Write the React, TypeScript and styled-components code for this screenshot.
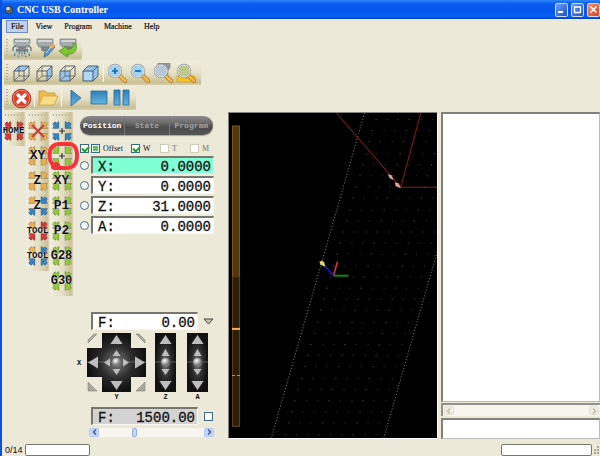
import React from "react";
import styled, { createGlobalStyle, css } from "styled-components";

const SERIF = '"Liberation Serif", serif';
const MONO = '"Liberation Mono", monospace';
const FACE = "#ece9d8";

const GlobalStyle = createGlobalStyle`
  * { box-sizing: border-box; }
  body { margin: 0; background: ${FACE}; }
  button, input { font: inherit; color: inherit; margin: 0; padding: 0; border: 0; border-radius: 0; background: none; min-width: 0; }
  svg { display: block; flex: none; }
`;

const Window = styled.div`
  display: flex;
  flex-direction: column;
  min-height: 100vh;
  border-left: 2px solid #0c50dc;
  background: ${FACE};
  font: 8px/10px ${SERIF};
  color: #111;
`;

const TitleBar = styled.header`
  display: flex;
  align-items: center;
  gap: 3px;
  height: 19px;
  padding: 0 0 0 2px;
  background: linear-gradient(#2f86f8, #0a5af0 20%, #0458ee 65%, #0a62fa 85%, #0340c0);
  color: #fff;
`;

const Title = styled.h1`
  flex: 1;
  margin: 0;
  font: bold 10px/14px ${SERIF};
  white-space: nowrap;
`;

const CaptionButton = styled.button<{ $danger?: boolean }>`
  display: grid;
  place-items: center;
  width: 13px;
  height: 14px;
  border: 1px solid #c9dcff;
  border-radius: 2px;
  background: ${(p) =>
    p.$danger ? "linear-gradient(135deg, #f09070, #d8401c)" : "linear-gradient(135deg, #6c9cf8, #1f50cc)"};
`;

const MenuBar = styled.nav`
  display: flex;
  gap: 2px;
  padding: 1px 4px 3px;
`;

const MenuItem = styled.button<{ $active?: boolean }>`
  height: 13px;
  padding: 0 4px;
  border: 1px solid ${(p) => (p.$active ? "#6c8cc8" : "transparent")};
  background: ${(p) => (p.$active ? "#c0d0ee" : "transparent")};
  line-height: 11px;
  -webkit-text-stroke: 0.2px #111;
`;

const Toolbars = styled.div`
  display: flex;
  flex-direction: column;
  align-items: flex-start;
  gap: 1px;
  padding: 0 2px 2px;
`;

const Toolbar = styled.div`
  display: flex;
  align-items: center;
  height: 24px;
  padding: 0 3px 0 2px;
  background: linear-gradient(#f0edde, #e6e0c6 50%, #c9c096 90%, #d8d1b0);
`;

const Grip = styled.span<{ $wide?: boolean }>`
  ${(p) =>
    p.$wide
      ? css`width: 18px; height: 2px; margin: 2px auto; background: repeating-linear-gradient(90deg, #b9b28e 0 1px, transparent 1px 3px);`
      : css`width: 2px; height: 18px; margin-right: 2px; background: repeating-linear-gradient(#b9b28e 0 1px, transparent 1px 3px);`}
`;

const ToolButton = styled.button`
  display: grid;
  place-items: center;
  width: 23px;
  height: 22px;
`;

const Separator = styled.span`
  width: 1px;
  height: 18px;
  margin: 0 2px 0 1px;
  background: #f8f6ea;
`;

const Body = styled.main`
  display: flex;
  flex: 1;
`;

const MacroColumns = styled.div`
  display: flex;
  align-items: flex-start;
  gap: 1px;
`;

const MacroColumn = styled.div`
  display: flex;
  flex-direction: column;
  width: 23px;
  padding-bottom: 3px;
  background: linear-gradient(90deg, #f1eee0, #e4dec4 55%, #cbc299 92%, #d9d2b2);
`;

const MacroButton = styled.button`
  position: relative;
  display: grid;
  place-items: center;
  height: 25px;
  > svg, > span { grid-area: 1 / 1; }
`;

const MacroText = styled.span<{ $size: number }>`
  position: relative;
  font: bold ${(p) => p.$size}px/14px ${MONO};
  text-shadow: 0 0 1px #fff;
`;

const Marker = styled.svg`
  position: absolute;
  left: -4px;
  top: -2px;
  z-index: 2;
  pointer-events: none;
`;

const Controls = styled.section`
  display: flex;
  flex-direction: column;
  width: 155px;
  padding: 4px 14px 2px 7px;
`;

const Tabs = styled.div`
  display: grid;
  grid-template-columns: repeat(3, 1fr);
  height: 19px;
  margin-right: 1px;
  border-radius: 10px;
  overflow: hidden;
  background: linear-gradient(#8c8c8c, #6c6c6c 35%, #4c4c4c 60%, #555);
  box-shadow: 0 1px 1px #aaa693;
`;

const Tab = styled.button<{ $active?: boolean }>`
  color: ${(p) => (p.$active ? "#fff" : "#a2a2a2")};
  font: bold 8px/18px ${MONO};
  & + & { border-left: 1px solid #777; }
`;

const Options = styled.div`
  display: flex;
  align-items: center;
  gap: 2px;
  height: 11px;
  margin: 8px 0 2px;
`;

const Option = styled.label<{ $muted?: boolean; $room?: number }>`
  display: flex;
  align-items: center;
  gap: 3px;
  width: ${(p) => (p.$room ? p.$room + "px" : "auto")};
  color: ${(p) => (p.$muted ? "#77756a" : "#111")};
`;

const Check = styled.input.attrs({ type: "checkbox" })<{ $mixed?: boolean }>`
  appearance: none;
  flex: none;
  width: 9px;
  height: 9px;
  border: 1px solid #3c6a8c;
  background: #fff;
  ${(p) =>
    p.$mixed &&
    css`background: #6cbc6e; box-shadow: inset 0 0 0 1px #e8f4e8;`}
  &:disabled { border-color: #d0ccb8; }
  &:checked::before {
    content: "";
    display: block;
    width: 5px;
    height: 3px;
    margin: 1px;
    border: solid #21a121;
    border-width: 0 0 2px 2px;
    transform: rotate(-45deg);
  }
`;

const AxisRow = styled.div`
  display: flex;
  align-items: center;
  gap: 2px;
  height: 18px;
  margin-bottom: 2px;
`;

const Radio = styled.input.attrs({ type: "radio" })`
  appearance: none;
  flex: none;
  width: 9px;
  height: 9px;
  border: 1px solid #456f90;
  border-radius: 50%;
  background: #f8f8f4;
`;

const Readout = styled.label<{ $tone?: string }>`
  display: flex;
  align-items: center;
  flex: 1;
  min-width: 0;
  height: 18px;
  padding: 2px 2px 0 5px;
  border: 1px solid #f8f7f0;
  border-top: 2px solid #77776f;
  border-left: 2px solid #77776f;
  background: ${(p) => p.$tone || "#fff"};
  font: 14px/16px ${MONO};
  color: #111;
  -webkit-text-stroke: 0.3px #111;
  input { flex: 1; width: 0; height: 14px; text-align: right; }
`;

const Spacer = styled.div`
  flex: 1;
  min-height: 20px;
`;

const FeedRow = styled.div`
  display: flex;
  align-items: center;
  gap: 5px;
  padding-left: 11px;
`;

const PlainButton = styled.button`
  display: grid;
  place-items: center;
  width: 11px;
  height: 12px;
`;

const JogGrid = styled.div`
  display: grid;
  grid-template-columns: 10px 59px 39px 25px;
  margin: 3px 0 5px -3px;
  justify-items: center;
  align-items: center;
  font: bold 7px/10px ${MONO};
  > :first-child { justify-self: start; }
`;

const JogPad = styled.button`
  display: block;
`;

const SliderRow = styled.div`
  display: flex;
  align-items: center;
  height: 10px;
  margin: 2px 0 0 9px;
`;

const Slider = styled.input.attrs({ type: "range" })`
  appearance: none;
  flex: 1;
  height: 9px;
  background: #f7f6f0;
  &::-webkit-slider-thumb {
    appearance: none;
    width: 5px;
    height: 9px;
    border: 1px solid #8fabdf;
    border-radius: 2px;
    background: #c8d8fa;
  }
`;

const ArrowButton = styled.button<{ $faint?: boolean }>`
  display: grid;
  place-items: center;
  width: 10px;
  height: 9px;
  border: 1px solid ${(p) => (p.$faint ? "#e2dfd0" : "#b4c8f2")};
  border-radius: 2px;
  background: ${(p) => (p.$faint ? "#f0eee4" : "#c6d6fb")};
  color: ${(p) => (p.$faint ? "#bdb9a6" : "#33529a")};
`;

const Viewport = styled.section`
  flex: 209 1 0;
  min-width: 0;
  border: 1px solid #fff;
  border-top-color: #85857c;
  border-left-color: #85857c;
  background: #000;
  display: flex;
  svg { flex: 1; min-width: 0; height: 325px; }
`;

const Side = styled.aside`
  display: flex;
  flex-direction: column;
  flex: 160 1 0;
  min-width: 0;
  margin: 0 0 0 3px;
`;

const sunken = css`
  border: 1px solid #b9bcb2;
  border-top: 2px solid #7f837c;
  border-left: 2px solid #7f837c;
  background: #fff;
`;

const Listing = styled.div`
  ${sunken}
  flex: 1;
`;

const ScrollStrip = styled.div`
  display: flex;
  justify-content: space-between;
  align-items: center;
  height: 13px;
  margin: 1px 0 2px;
  padding: 0 1px;
  border-top: 2px solid #8f928a;
  border-left: 2px solid #8f928a;
  background: #f7f6ee;
`;

const CommandInput = styled.input`
  &&& { ${sunken} }
  height: 21px;
  width: 100%;
`;

const StatusBar = styled.footer`
  display: flex;
  align-items: center;
  height: 17px;
  padding: 4px 0 0 3px;
  font: 9px/12px "Liberation Sans", sans-serif;
`;

const Meter = styled.div<{ $width: number }>`
  width: ${(p) => p.$width}px;
  height: 12px;
  border: 1px solid #77776f;
  border-radius: 2px;
  background: #fff;
`;

const StatusCount = styled.span`
  width: 20px;
`;

const StatusGap = styled.span`
  flex: 1;
`;

const Spindle = ({ kind }: { kind: "spray" | "tool" | "return" }) => (
  <svg width="20" height="20" viewBox="0 0 20 20">
    <path d="M2 1h16v5l-2 3H4L2 6z" fill="#a5abad" stroke="#70787b" strokeWidth=".7" />
    <path d="M3 2h14v2H3z" fill="#d2d6d8" />
    <path d="M6 9h8l-1 4H7z" fill="#7f898d" stroke="#667" strokeWidth=".5" />
    <path d="M9 13h2v5l-1 1-1-1z" fill="#9aa2a6" />
    {kind === "spray" && (
      <g stroke="#55788e" strokeWidth="1.3" fill="none">
        <path d="M4 7 1 10v3M16 7l3 3v3M6 11l-4 7M14 11l4 7M8 13l-2 6M12 13l2 6M4 11l4 3M16 11l-4 3" />
        <path d="M1 15h4M15 15h4M6 17h2M12 17h2M2 6h2M16 6h2" stroke="#a9ccdd" />
      </g>
    )}
    {kind === "tool" && (
      <g>
        <path d="m18 6-8 9-1 4 4-2 7-8z" fill="#4f9bd0" stroke="#2e658e" strokeWidth=".7" />
        <path d="m18 5-4 4 3 2 3-3z" fill="#eca852" />
        <path d="m11 15 5-6" stroke="#cbe8fa" />
      </g>
    )}
    {kind === "return" && (
      <path d="M18 6c2 7-3 11-9 10v3l-8-6 8-5v3c4 1 7-1 6-6z" fill="#7fc832" stroke="#4a8a18" strokeWidth=".7" />
    )}
  </svg>
);

const faces: Record<string, string> = {
  top: "M2 7 7 2h10l-5 5z",
  side: "M12 7l5-5v10l-5 5z",
  front: "M2 7h10v10H2z",
  all: "M2 7 7 2h10v10l-5 5H2z",
};

const Cube = ({ face }: { face: string }) => (
  <svg width="19" height="19" viewBox="0 0 19 19" fill="none" stroke="#4f565c">
    <path d={faces[face]} fill="#94c4ee" stroke="none" />
    {face !== "all" && <path d="M2 17l5-5V2M7 12h10" strokeWidth=".7" />}
    <path d="M2 7h10v10H2zM2 7l5-5h10l-5 5M17 2v10l-5 5" strokeWidth=".9" />
    {face === "all" && <path d="M3 8h8v8H3z" fill="#b2d6f5" stroke="none" />}
  </svg>
);

const Magnifier = ({ kind }: { kind: "in" | "out" | "spindle" | "area" }) => (
  <svg width="21" height="21" viewBox="0 0 21 21">
    {kind === "spindle" && <path d="M5 0h12v5l-2 2v5H7V7L5 5z" fill="#949b9f" stroke="#727a7e" strokeWidth=".6" />}
    {kind === "area" && <path d="M1 13h6v2h5v-2h7v6H1z" fill="#f2c424" stroke="#c99a12" strokeWidth=".6" />}
    <path d="m13 13 5 5" stroke="#b67a1d" strokeWidth="4.2" strokeLinecap="round" />
    <path d="m13 13 5 5" stroke="#f5bb4c" strokeWidth="2.6" strokeLinecap="round" />
    <circle cx="8" cy="8" r="6.3" fill={kind === "area" ? "#bfc987" : kind === "spindle" ? "#b6c9d6" : "#9fd4f5"} stroke="#8a9299" strokeWidth="1.8" />
    <circle cx="8" cy="8" r="6" fill="none" stroke="#eef4f7" strokeWidth="1" />
    {kind === "in" && <path d="M5 8h6M8 5v6" stroke="#1765a8" strokeWidth="1.7" />}
    {kind === "out" && <path d="M5 8h6" stroke="#1765a8" strokeWidth="1.7" />}
  </svg>
);

const Stop = () => (
  <svg width="21" height="21" viewBox="0 0 21 21">
    <circle cx="10.5" cy="10.5" r="9.3" fill="#d8402f" stroke="#a83328" />
    <circle cx="10.5" cy="10.5" r="8.2" fill="none" stroke="#ee9284" strokeWidth=".8" />
    <path d="m7 7 7 7m0-7-7 7" stroke="#fff" strokeWidth="3.2" strokeLinecap="round" />
  </svg>
);

const Folder = () => (
  <svg width="21" height="18" viewBox="0 0 21 18">
    <path d="M1 16V2h6l2 2h8v3" fill="#edbd4f" stroke="#c99837" strokeWidth=".8" />
    <path d="M1 16 5 7h15l-4 9z" fill="#f9dc86" stroke="#d0a040" strokeWidth=".8" />
  </svg>
);

const Transport = ({ kind }: { kind: "play" | "stop" | "pause" }) => (
  <svg width="18" height="18" viewBox="0 0 18 18" stroke="#286b9c" strokeWidth=".8">
    <defs>
      <linearGradient id={"blue-" + kind} x2="0" y2="1">
        <stop stopColor="#2f80b8" />
        <stop offset="1" stopColor="#62b4e2" />
      </linearGradient>
    </defs>
    <path
      fill={`url(#blue-${kind})`}
      d={kind === "play" ? "M4 1l10 8-10 8z" : kind === "stop" ? "M1 2h16v13H1z" : "M1 1h6v15H1zM10 1h6v15h-6z"}
    />
  </svg>
);

const R = "#cf3d3a";
const Y = "#e9b050";
const B = "#3484c4";
const G = "#92c83a";

const Corners = ({ colors, mark }: { colors: string[]; mark?: string }) => (
  <svg width="22" height="22" viewBox="0 0 22 22">
    {colors.map((c, i) => (
      <path
        key={i}
        transform={["", "matrix(-1 0 0 1 22 0)", "matrix(1 0 0 -1 0 22)", "matrix(-1 0 0 -1 22 22)"][i]}
        d="M2 4l2-2 1.500 1.500L7.500 2v6H2l1.500-2z"
        fill={c}
        stroke={c}
        strokeWidth="1"
      />
    ))}
    {colors.map((c, i) => (
      <path
        key={"edge" + i}
        transform={["", "matrix(-1 0 0 1 22 0)", "matrix(1 0 0 -1 0 22)", "matrix(-1 0 0 -1 22 22)"][i]}
        d="M1.500 4.200 4 1.700l1.500 1L8 1.500v7H1.500L3 6.200z"
        fill="none"
        stroke="#0005"
        strokeWidth=".6"
      />
    ))}
    {mark === "plus" && <path d="M8 11h6M11 8v6" stroke="#333" strokeWidth="1.2" />}
    {mark === "cross" && <path d="M5 5l12 12M17 5 5 17" stroke="#c4453c" strokeWidth="2.4" />}
  </svg>
);

type Macro = { name: string; colors: string[]; text?: string; size?: number; mark?: string; marked?: boolean };

const macros: Macro[][] = [
  [{ name: "Home", text: "HOME", size: 9, colors: [R, R, R, R] }],
  [
    { name: "Clear offset", mark: "cross", colors: [Y, Y, Y, Y] },
    { name: "Zero XY", text: "XY", size: 13, colors: [Y, Y, Y, Y] },
    { name: "Zero Z", text: "Z", size: 13, colors: [Y, Y, Y, Y] },
    { name: "Measure Z", text: "Z", size: 13, colors: [Y, B, B, B] },
    { name: "Tool change", text: "TOOL", size: 9, colors: [Y, R, R, R] },
    { name: "Tool measure", text: "TOOL", size: 9, colors: [Y, B, B, B] },
  ],
  [
    { name: "Move to offset", mark: "plus", colors: [B, B, B, B] },
    { name: "Move to zero", mark: "plus", colors: [G, G, G, G], marked: true },
    { name: "Go to XY", text: "XY", size: 13, colors: [G, G, G, G] },
    { name: "Go to P1", text: "P1", size: 13, colors: [G, G, G, G] },
    { name: "Go to P2", text: "P2", size: 13, colors: [G, G, G, G] },
    { name: "Go to G28", text: "G28", size: 12, colors: [G, G, G, G] },
    { name: "Go to G30", text: "G30", size: 12, colors: [G, G, G, G] },
  ],
];

const axes = [
  { axis: "X", value: "0.0000", tone: "#7fffd4" },
  { axis: "Y", value: "0.0000" },
  { axis: "Z", value: "31.0000" },
  { axis: "A", value: "0.0000" },
];

const CrossPad = () => (
  <svg width="59" height="59" viewBox="0 0 59 59">
    <defs>
      <radialGradient id="pad">
        <stop stopColor="#7a7a7a" />
        <stop offset=".55" stopColor="#2c2c2c" />
        <stop offset="1" stopColor="#111" />
      </radialGradient>
      <radialGradient id="ball" cx=".4" cy=".3">
        <stop stopColor="#fff" />
        <stop offset="1" stopColor="#777" />
      </radialGradient>
    </defs>
    <path d="M15 0h29v15h15v29H44v15H15V44H0V15h15z" fill="url(#pad)" />
    <path d="M0 29h59" stroke="#777" strokeWidth=".7" />
    <g fill="#bdbdbd">
      <path d="m29.500 2 6 9h-12zM29.500 57l6-9h-12zM1 29.500l10-6v12zM58 29.500l-10-6v12z" />
      <path d="m29.500 17 4 6h-8zM29.500 42l4-6h-8zM17 29.500l6-4v8zM42 29.500l-6-4v8z" />
    </g>
    <g fill="#aaa89c" stroke="#77756a" strokeWidth=".5">
      <path d="M1 10V7l6-6h3zM58 10V7l-6-6h-3zM1 49v9h9zM58 49v9h-9z" />
    </g>
    <circle cx="29.500" cy="29.500" r="4.500" fill="url(#ball)" />
  </svg>
);

const ColumnPad = () => (
  <svg width="21" height="59" viewBox="0 0 21 59">
    <path d="M0 0h21v59H0z" fill="url(#pad)" />
    <path d="M0 29h21" stroke="#777" strokeWidth=".7" />
    <path d="m10.500 2 6 9h-12zM10.500 57l6-9h-12zM10.500 16l4 7h-8zM10.500 42l4-6h-8z" fill="#bdbdbd" />
    <circle cx="10.500" cy="29.500" r="4.500" fill="url(#ball)" />
  </svg>
);

const edgeX = (y: number) => 136 - y * 0.287;
const gridDots = Array.from({ length: 29 }, (_, row) => {
  const y = 6 + row * 11.2;
  return Array.from({ length: 9 }, (_, col) => [edgeX(y) + 11.3 * (col + 1), y]);
}).flat();

const Scene = () => (
  <svg viewBox="0 0 207 324" preserveAspectRatio="xMinYMin slice" role="img" aria-label="Tool path view">
    <path d="M3.500 13h7v299h-7z" fill="#553509" stroke="#765a2c" />
    <path d="M3.500 163h7v149h-7z" fill="#2d1d08" stroke="#5c4118" />
    <path d="M3 215h8" stroke="#ffad55" strokeWidth="2" />
    <path d="M3 261.500h3m2 0h3" stroke="#c98f4c" />
    {gridDots.map(([x, y], i) => (
      <rect key={i} x={Math.round(x)} y={Math.round(y)} width="1" height="1" fill={i % 3 ? "#42423a" : "#606054"} />
    ))}
    <path d="M135 0 42 324M247 0l-93 324" stroke="#8f8468" strokeDasharray="1 2" />
    <path d="m107 0 64 74L191 0M171 74h60" fill="none" stroke="#8b1919" />
    <path d="m158 61 4 1 2 5-4-2zM165 69l4 1 2 5-5-2z" fill="#d6a39a" />
    <path d="M104 162h15" stroke="#178117" strokeWidth="2" />
    <path d="m104 162 4-14" stroke="#e23838" strokeWidth="1.5" />
    <path d="m104 162-8-9" stroke="#1616b8" strokeWidth="2" />
    <path d="M90 148l3-1 2 2 1 4-5-2z" fill="#ded66b" />
  </svg>
);

const Chevron = ({ right }: { right?: boolean }) => (
  <svg width="5" height="6" viewBox="0 0 5 6" fill="none" stroke="currentColor" strokeWidth="1.4">
    <path d={right ? "m1 .5 2.500 2.500L1 5.500" : "M4 .5 1.500 3 4 5.500"} />
  </svg>
);

export default function App() {
  return (
    <Window>
      <GlobalStyle />
      <TitleBar>
        <svg width="10" height="10" viewBox="0 0 10 10">
          <circle cx="5" cy="5" r="4" fill="#5b6570" stroke="#25415f" />
          <circle cx="4" cy="3.500" r="1.800" fill="#d5dade" />
        </svg>
        <Title>CNC USB Controller</Title>
        <CaptionButton aria-label="Minimize">
          <svg width="9" height="9"><path d="M1 7h5" stroke="#fff" strokeWidth="2" /></svg>
        </CaptionButton>
        <CaptionButton aria-label="Maximize">
          <svg width="9" height="9"><path d="M1 2h7M1.500 2v5.500h6V2" fill="none" stroke="#fff" strokeWidth="1.300" /></svg>
        </CaptionButton>
        <CaptionButton aria-label="Close" $danger>
          <svg width="9" height="9"><path d="m1.500 1.500 6 6m0-6-6 6" stroke="#fff" strokeWidth="1.600" /></svg>
        </CaptionButton>
      </TitleBar>

      <MenuBar>
        {["File", "View", "Program", "Machine", "Help"].map((item) => (
          <MenuItem key={item} $active={item === "File"}>{item}</MenuItem>
        ))}
      </MenuBar>

      <Toolbars>
        <Toolbar>
          <Grip />
          <ToolButton aria-label="Coolant"><Spindle kind="spray" /></ToolButton>
          <ToolButton aria-label="Spindle tool"><Spindle kind="tool" /></ToolButton>
          <ToolButton aria-label="Spindle direction"><Spindle kind="return" /></ToolButton>
        </Toolbar>
        <Toolbar>
          <Grip />
          <ToolButton aria-label="Top view"><Cube face="top" /></ToolButton>
          <ToolButton aria-label="Side view"><Cube face="side" /></ToolButton>
          <ToolButton aria-label="Front view"><Cube face="front" /></ToolButton>
          <ToolButton aria-label="Perspective view"><Cube face="all" /></ToolButton>
          <Separator />
          <ToolButton aria-label="Zoom in"><Magnifier kind="in" /></ToolButton>
          <ToolButton aria-label="Zoom out"><Magnifier kind="out" /></ToolButton>
          <ToolButton aria-label="Zoom to tool"><Magnifier kind="spindle" /></ToolButton>
          <ToolButton aria-label="Zoom to program"><Magnifier kind="area" /></ToolButton>
        </Toolbar>
        <Toolbar>
          <Grip />
          <ToolButton aria-label="Emergency stop"><Stop /></ToolButton>
          <Separator />
          <ToolButton aria-label="Open"><Folder /></ToolButton>
          <Separator />
          <ToolButton aria-label="Start"><Transport kind="play" /></ToolButton>
          <ToolButton aria-label="Stop"><Transport kind="stop" /></ToolButton>
          <ToolButton aria-label="Pause"><Transport kind="pause" /></ToolButton>
        </Toolbar>
      </Toolbars>

      <Body>
        <MacroColumns>
          {macros.map((column, i) => (
            <MacroColumn key={i}>
              <Grip $wide />
              {column.map((m) => (
                <MacroButton key={m.name} aria-label={m.name}>
                  <Corners colors={m.colors} mark={m.mark} />
                  {m.text && <MacroText $size={m.size || 9}>{m.text}</MacroText>}
                  {m.marked && (
                    <Marker width="34" height="32" viewBox="0 0 34 32" fill="none" stroke="#f5343c" strokeWidth="4" strokeLinecap="round" strokeLinejoin="round">
                      <path d="M13 26c-1-3-3-4-5-2-4-2-5-7-4-14 1-5 4-7 10-7h9c5 0 8 4 8 11 0 9-3 13-11 13H9c-2 0-3-1-2-3" />
                    </Marker>
                  )}
                </MacroButton>
              ))}
            </MacroColumn>
          ))}
        </MacroColumns>

        <Controls>
          <Tabs>
            <Tab $active>Position</Tab>
            <Tab>State</Tab>
            <Tab>Program</Tab>
          </Tabs>
          <Options>
            <Check defaultChecked aria-label="Show position" />
            <Option $room={38}><Check $mixed />Offset</Option>
            <Option $room={27}><Check defaultChecked />W</Option>
            <Option $room={28} $muted><Check disabled />T</Option>
            <Option $muted><Check disabled />M</Option>
          </Options>
          {axes.map((a) => (
            <AxisRow key={a.axis}>
              <Radio name="axis" aria-label={"Select axis " + a.axis} />
              <Readout $tone={a.tone}>
                {a.axis}:
                <input defaultValue={a.value} />
              </Readout>
            </AxisRow>
          ))}
          <Spacer />
          <FeedRow>
            <Readout>F:<input defaultValue="0.00" /></Readout>
            <PlainButton aria-label="Feed options">
              <svg width="11" height="7" viewBox="0 0 11 7"><path d="M1 1h9L5.500 6z" fill="#c9c5b4" stroke="#444" /></svg>
            </PlainButton>
          </FeedRow>
          <JogGrid>
            <span>X</span>
            <JogPad aria-label="Jog X and Y"><CrossPad /></JogPad>
            <JogPad aria-label="Jog Z"><ColumnPad /></JogPad>
            <JogPad aria-label="Jog A"><ColumnPad /></JogPad>
            <span />
            <span>Y</span>
            <span>Z</span>
            <span>A</span>
          </JogGrid>
          <FeedRow>
            <Readout $tone="#d3d3d3">F:<input defaultValue="1500.00" /></Readout>
            <PlainButton as="span"><Check aria-label="Override feed" /></PlainButton>
          </FeedRow>
          <SliderRow>
            <ArrowButton aria-label="Slower"><Chevron /></ArrowButton>
            <Slider aria-label="Feed rate" min={0} max={100} defaultValue={33} />
            <ArrowButton aria-label="Faster"><Chevron right /></ArrowButton>
          </SliderRow>
        </Controls>

        <Viewport><Scene /></Viewport>

        <Side>
          <Listing aria-label="Program listing" />
          <ScrollStrip>
            <ArrowButton $faint aria-label="Scroll left"><Chevron /></ArrowButton>
            <ArrowButton $faint aria-label="Scroll right"><Chevron right /></ArrowButton>
          </ScrollStrip>
          <CommandInput aria-label="Command" />
        </Side>
      </Body>

      <StatusBar>
        <StatusCount>0/14</StatusCount>
        <Meter $width={65} role="progressbar" aria-label="Program progress" />
        <StatusGap />
        <Meter $width={91} role="progressbar" aria-label="Buffer" />
        <svg width="8" height="10" viewBox="0 0 8 10" fill="#aaa690">
          <path d="M5 1h2v2H5zM2 4h2v2H2zM5 4h2v2H5zM2 7h2v2H2zM5 7h2v2H5z" />
        </svg>
      </StatusBar>
    </Window>
  );
}
